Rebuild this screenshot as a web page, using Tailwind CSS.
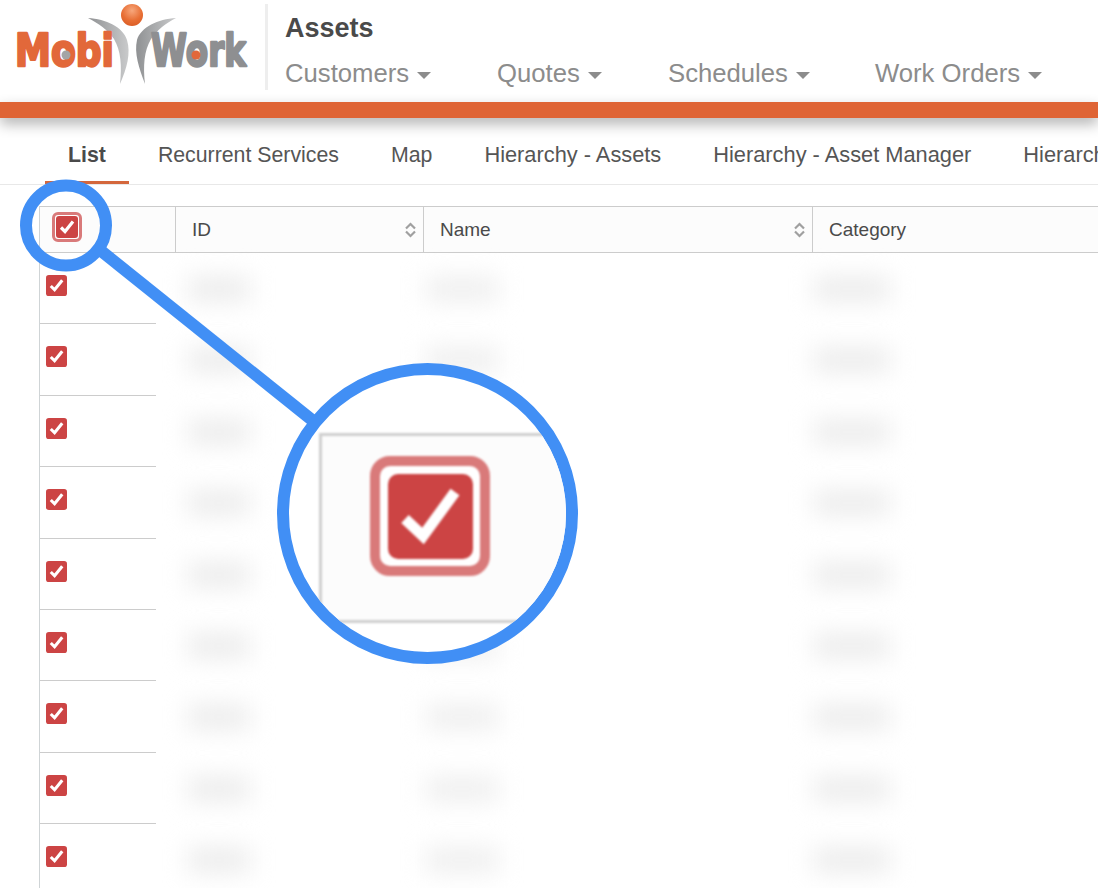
<!DOCTYPE html>
<html lang="en">
<head>
  <meta charset="UTF-8">
  <title>Assets</title>
  <script src="https://cdn.jsdelivr.net/npm/@tailwindcss/browser@4"></script>
</head>
<body class="relative h-[888px] w-[1098px] overflow-hidden bg-white font-['Liberation_Sans',Arial,sans-serif]">
  <!-- Header -->
  <header class="flex h-[102px] bg-white">
    <div class="h-full w-[265px] shrink-0">
      <svg width="265" height="102" viewBox="0 0 265 102">
        <defs>
          <linearGradient id="swoosh" x1="0" y1="0" x2="1" y2="0">
            <stop offset="0" stop-color="#8f9193"/>
            <stop offset="1" stop-color="#c9cacb"/>
          </linearGradient>
          <radialGradient id="ball" cx="0.5" cy="0.3" r="0.75">
            <stop offset="0" stop-color="#f7a77c"/>
            <stop offset="0.6" stop-color="#e86f35"/>
            <stop offset="1" stop-color="#d95b24"/>
          </radialGradient>
        </defs>
        <circle cx="132" cy="15" r="11" fill="url(#ball)"/>
        <path d="M88 18C106 19 123 27 127 40C131 53 127 68 120 84C122 66 121 51 114 39C108 30 98 23 88 18Z" fill="url(#swoosh)"/>
        <path d="M176 18C158 19 141 27 137 40C134 53 139 68 145 84C143 66 144 51 151 39C157 30 166 23 176 18Z" fill="url(#swoosh)"/>
        <text x="15" y="66" font-family="DejaVu Sans" font-size="44" font-weight="700" fill="#e2683a" stroke="#e2683a" stroke-width="2.5" stroke-linejoin="round" textLength="99" lengthAdjust="spacingAndGlyphs">Mobi</text>
        <text x="151" y="66" font-family="DejaVu Sans" font-size="44" font-weight="700" fill="#8e8f91" stroke="#8e8f91" stroke-width="2.5" stroke-linejoin="round" textLength="95" lengthAdjust="spacingAndGlyphs">Work</text>
        <circle cx="66" cy="55" r="4.5" fill="#a3a4a6"/>
        <circle cx="196" cy="55" r="4.5" fill="#e2683a"/>
      </svg>
    </div>
    <div class="mt-1 h-[86px] w-[3px] shrink-0 bg-[#eeeeee]"></div>
    <div class="pl-[17px]">
      <h1 class="mt-3 text-[27px] leading-8 font-bold text-[#4a4a4a]">Assets</h1>
      <nav class="mt-[13px] flex text-[25.7px] leading-8 text-[#8c8c8c]">
        <span class="flex w-[212px] items-center">Customers<i class="mt-1 ml-2 h-0 w-0 border-x-[7px] border-t-[7px] border-x-transparent border-t-[#8c8c8c]"></i></span>
        <span class="flex w-[171px] items-center">Quotes<i class="mt-1 ml-2 h-0 w-0 border-x-[7px] border-t-[7px] border-x-transparent border-t-[#8c8c8c]"></i></span>
        <span class="flex w-[207px] items-center">Schedules<i class="mt-1 ml-2 h-0 w-0 border-x-[7px] border-t-[7px] border-x-transparent border-t-[#8c8c8c]"></i></span>
        <span class="flex items-center">Work Orders<i class="mt-1 ml-2 h-0 w-0 border-x-[7px] border-t-[7px] border-x-transparent border-t-[#8c8c8c]"></i></span>
      </nav>
    </div>
  </header>
  <div class="h-4 bg-[#df6435] shadow-[0_6px_14px_rgba(0,0,0,0.3)]"></div>

  <!-- Tabs -->
  <div class="mt-3 flex h-[55px] gap-[6px] overflow-hidden whitespace-nowrap border-b border-[#e8e8e8] pl-[45px] text-[21.3px] text-[#555555]">
    <span class="h-[54px] border-b-[3px] border-[#d4673c] px-[23px] pt-[11px] leading-7 font-bold text-[#4a4a4a]">List</span>
    <span class="px-[23px] pt-[11px] leading-7">Recurrent Services</span>
    <span class="px-[23px] pt-[11px] leading-7">Map</span>
    <span class="px-[23px] pt-[11px] text-[21.8px] leading-7">Hierarchy - Assets</span>
    <span class="px-[23px] pt-[11px] text-[21.8px] leading-7">Hierarchy - Asset Manager</span>
    <span class="px-[23px] pt-[11px] text-[21.8px] leading-7">Hierarchy</span>
  </div>

  <!-- Table -->
  <div class="mt-[21px] ml-[39px] border-l border-[#cfd4d6]">
    <div class="flex h-[47px] border-y border-[#cccccc] bg-[#fcfcfc] text-[19px] text-[#4a4a4a]">
      <div class="flex w-[135px] shrink-0 items-start pt-[5px] pl-3">
        <span class="flex h-[30px] w-[30px] items-center justify-center rounded-[6px] border-[3px] border-[#d97a7a] bg-white">
          <svg width="22" height="22" viewBox="0 0 22 22"><rect width="22" height="22" rx="3" fill="#cc4444"/><path d="M5 11.5L9 15.5L17 5.5" fill="none" stroke="#fff" stroke-width="3.2"/></svg>
        </span>
      </div>
      <div class="flex w-[248px] shrink-0 items-center justify-between border-l border-[#cccccc] pt-[1px] pr-[6px] pl-4">ID
        <svg width="13" height="16" viewBox="0 0 13 16"><path d="M2 6.5L6.5 2L11 6.5M2 9.5L6.5 14L11 9.5" fill="none" stroke="#a0a0a0" stroke-width="2.2"/></svg>
      </div>
      <div class="flex w-[389px] shrink-0 items-center justify-between border-l border-[#cccccc] pt-[1px] pr-[6px] pl-4">Name
        <svg width="13" height="16" viewBox="0 0 13 16"><path d="M2 6.5L6.5 2L11 6.5M2 9.5L6.5 14L11 9.5" fill="none" stroke="#a0a0a0" stroke-width="2.2"/></svg>
      </div>
      <div class="flex flex-1 items-center border-l border-[#cccccc] pt-[1px] pl-4">Category</div>
    </div>

    <!-- Rows -->
    <div class="flex h-[71.4px]">
      <div class="h-full w-[116px] shrink-0 border-b border-[#cccccc] pt-[22px] pl-[6px]"><svg width="21" height="21" viewBox="0 0 22 22"><rect width="22" height="22" rx="3" fill="#cc4444"/><path d="M5 11.5L9 15.5L17 5.5" fill="none" stroke="#fff" stroke-width="3.2"/></svg></div>
      <div class="mt-6 ml-[32px] h-6 w-[62px] bg-[#ebebeb] blur-[12px]"></div>
      <div class="mt-6 ml-[176px] h-6 w-[72px] bg-[#eeeeee] blur-[12px]"></div>
      <div class="mt-6 ml-[316px] h-6 w-[76px] bg-[#ebebeb] blur-[12px]"></div>
    </div>
    <div class="flex h-[71.4px]">
      <div class="h-full w-[116px] shrink-0 border-b border-[#cccccc] pt-[22px] pl-[6px]"><svg width="21" height="21" viewBox="0 0 22 22"><rect width="22" height="22" rx="3" fill="#cc4444"/><path d="M5 11.5L9 15.5L17 5.5" fill="none" stroke="#fff" stroke-width="3.2"/></svg></div>
      <div class="mt-6 ml-[32px] h-6 w-[62px] bg-[#ebebeb] blur-[12px]"></div>
      <div class="mt-6 ml-[176px] h-6 w-[72px] bg-[#eeeeee] blur-[12px]"></div>
      <div class="mt-6 ml-[316px] h-6 w-[76px] bg-[#ebebeb] blur-[12px]"></div>
    </div>
    <div class="flex h-[71.4px]">
      <div class="h-full w-[116px] shrink-0 border-b border-[#cccccc] pt-[22px] pl-[6px]"><svg width="21" height="21" viewBox="0 0 22 22"><rect width="22" height="22" rx="3" fill="#cc4444"/><path d="M5 11.5L9 15.5L17 5.5" fill="none" stroke="#fff" stroke-width="3.2"/></svg></div>
      <div class="mt-6 ml-[32px] h-6 w-[62px] bg-[#ebebeb] blur-[12px]"></div>
      <div class="mt-6 ml-[176px] h-6 w-[72px] bg-[#eeeeee] blur-[12px]"></div>
      <div class="mt-6 ml-[316px] h-6 w-[76px] bg-[#ebebeb] blur-[12px]"></div>
    </div>
    <div class="flex h-[71.4px]">
      <div class="h-full w-[116px] shrink-0 border-b border-[#cccccc] pt-[22px] pl-[6px]"><svg width="21" height="21" viewBox="0 0 22 22"><rect width="22" height="22" rx="3" fill="#cc4444"/><path d="M5 11.5L9 15.5L17 5.5" fill="none" stroke="#fff" stroke-width="3.2"/></svg></div>
      <div class="mt-6 ml-[32px] h-6 w-[62px] bg-[#ebebeb] blur-[12px]"></div>
      <div class="mt-6 ml-[176px] h-6 w-[72px] bg-[#eeeeee] blur-[12px]"></div>
      <div class="mt-6 ml-[316px] h-6 w-[76px] bg-[#ebebeb] blur-[12px]"></div>
    </div>
    <div class="flex h-[71.4px]">
      <div class="h-full w-[116px] shrink-0 border-b border-[#cccccc] pt-[22px] pl-[6px]"><svg width="21" height="21" viewBox="0 0 22 22"><rect width="22" height="22" rx="3" fill="#cc4444"/><path d="M5 11.5L9 15.5L17 5.5" fill="none" stroke="#fff" stroke-width="3.2"/></svg></div>
      <div class="mt-6 ml-[32px] h-6 w-[62px] bg-[#ebebeb] blur-[12px]"></div>
      <div class="mt-6 ml-[176px] h-6 w-[72px] bg-[#eeeeee] blur-[12px]"></div>
      <div class="mt-6 ml-[316px] h-6 w-[76px] bg-[#ebebeb] blur-[12px]"></div>
    </div>
    <div class="flex h-[71.4px]">
      <div class="h-full w-[116px] shrink-0 border-b border-[#cccccc] pt-[22px] pl-[6px]"><svg width="21" height="21" viewBox="0 0 22 22"><rect width="22" height="22" rx="3" fill="#cc4444"/><path d="M5 11.5L9 15.5L17 5.5" fill="none" stroke="#fff" stroke-width="3.2"/></svg></div>
      <div class="mt-6 ml-[32px] h-6 w-[62px] bg-[#ebebeb] blur-[12px]"></div>
      <div class="mt-6 ml-[176px] h-6 w-[72px] bg-[#eeeeee] blur-[12px]"></div>
      <div class="mt-6 ml-[316px] h-6 w-[76px] bg-[#ebebeb] blur-[12px]"></div>
    </div>
    <div class="flex h-[71.4px]">
      <div class="h-full w-[116px] shrink-0 border-b border-[#cccccc] pt-[22px] pl-[6px]"><svg width="21" height="21" viewBox="0 0 22 22"><rect width="22" height="22" rx="3" fill="#cc4444"/><path d="M5 11.5L9 15.5L17 5.5" fill="none" stroke="#fff" stroke-width="3.2"/></svg></div>
      <div class="mt-6 ml-[32px] h-6 w-[62px] bg-[#ebebeb] blur-[12px]"></div>
      <div class="mt-6 ml-[176px] h-6 w-[72px] bg-[#eeeeee] blur-[12px]"></div>
      <div class="mt-6 ml-[316px] h-6 w-[76px] bg-[#ebebeb] blur-[12px]"></div>
    </div>
    <div class="flex h-[71.4px]">
      <div class="h-full w-[116px] shrink-0 border-b border-[#cccccc] pt-[22px] pl-[6px]"><svg width="21" height="21" viewBox="0 0 22 22"><rect width="22" height="22" rx="3" fill="#cc4444"/><path d="M5 11.5L9 15.5L17 5.5" fill="none" stroke="#fff" stroke-width="3.2"/></svg></div>
      <div class="mt-6 ml-[32px] h-6 w-[62px] bg-[#ebebeb] blur-[12px]"></div>
      <div class="mt-6 ml-[176px] h-6 w-[72px] bg-[#eeeeee] blur-[12px]"></div>
      <div class="mt-6 ml-[316px] h-6 w-[76px] bg-[#ebebeb] blur-[12px]"></div>
    </div>
    <div class="flex h-[71.4px]">
      <div class="h-full w-[116px] shrink-0 pt-[22px] pl-[6px]"><svg width="21" height="21" viewBox="0 0 22 22"><rect width="22" height="22" rx="3" fill="#cc4444"/><path d="M5 11.5L9 15.5L17 5.5" fill="none" stroke="#fff" stroke-width="3.2"/></svg></div>
      <div class="mt-6 ml-[32px] h-6 w-[62px] bg-[#ebebeb] blur-[12px]"></div>
      <div class="mt-6 ml-[176px] h-6 w-[72px] bg-[#eeeeee] blur-[12px]"></div>
      <div class="mt-6 ml-[316px] h-6 w-[76px] bg-[#ebebeb] blur-[12px]"></div>
    </div>
  </div>

  <!-- Callout overlay -->
  <svg class="absolute top-0 left-0" width="1098" height="888" viewBox="0 0 1098 888">
    <line x1="100" y1="250" x2="312" y2="420" stroke="#418ff5" stroke-width="12"/>
    <circle cx="66" cy="225.5" r="40" fill="none" stroke="#418ff5" stroke-width="12"/>
  </svg>
  <div class="absolute top-[363px] left-[277px] h-[301px] w-[301px] overflow-hidden rounded-full border-[12px] border-[#418ff5] bg-white">
    <div class="absolute top-[58px] left-[30px] h-[190px] w-[300px] border-y-[3px] border-l-[3px] border-[#cfcfcf] bg-[#fcfcfc] blur-[1px]"></div>
    <div class="absolute top-[81px] left-[81px] flex h-[120px] w-[120px] items-center justify-center rounded-[20px] border-[10px] border-[#d97a7a] bg-white blur-[1px]">
      <svg width="85" height="85" viewBox="0 0 85 85"><rect width="85" height="85" rx="10" fill="#cc4444"/><path d="M17 45L35 62L67 18" fill="none" stroke="#fff" stroke-width="11"/></svg>
    </div>
  </div>
</body>
</html>
